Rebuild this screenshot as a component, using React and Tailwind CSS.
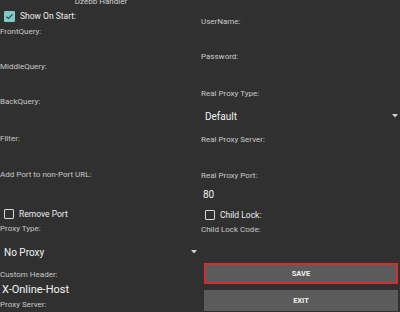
import React from 'react';

// Label shown above each input field
function Label({ text, h = 'h-[10px]' }) {
  return (
    <div className={`${h} flex items-center text-[8px] text-[#c8c8c8] whitespace-nowrap`}>
      {text}
    </div>
  );
}

// Square checkbox with a caption
function Check({ checked, text, className = '' }) {
  return (
    <div className={`flex items-center gap-[5px] ${className}`}>
      {checked ? (
        <span className="w-[11px] h-[11px] rounded-[1px] bg-[#80cbc4] flex items-center justify-center">
          <svg width="9" height="9" viewBox="0 0 24 24">
            <path d="M4 12.5l5 5L20 6.5" fill="none" stroke="#263238" strokeWidth="3" />
          </svg>
        </span>
      ) : (
        <span className="w-[10px] h-[10px] rounded-[1px] border-[1.5px] border-[#d8d8d8]" />
      )}
      <span className="text-[8.5px] text-[#ececec]">{text}</span>
    </div>
  );
}

// Spinner with the small triangle on the right
function Spinner({ value, className = '' }) {
  return (
    <div className={`h-[20px] flex items-center justify-between ${className}`}>
      <span className="text-[10px] text-[#f2f2f2]">{value}</span>
      <svg width="6" height="4" viewBox="0 0 6 4">
        <path d="M0 0h6L3 3.5z" fill="#d0d0d0" />
      </svg>
    </div>
  );
}

function Button({ text, danger }) {
  return (
    <div
      className={`h-[21px] bg-[#5b5b5b] flex items-center justify-center text-[7.5px] font-bold text-[#f0f0f0] ${
        danger ? 'border-[2px] border-[#d32f2f]' : ''
      }`}
    >
      {text}
    </div>
  );
}

export default function App() {
  return (
    <div
      className="w-[400px] h-[312px] bg-[#303030] overflow-hidden grid grid-cols-[200px_200px]"
      style={{ fontFamily: 'Roboto, "Noto Sans", sans-serif' }}
    >
      {/* left column */}
      <div className="flex flex-col pr-[3px]">
        <div className="h-[10px] -mt-[3px] -mb-[1px] flex items-center justify-center pl-[5px] text-[8px] text-[#cfcfcf]">
          Dzebb Handler
        </div>
        <Check checked text="Show On Start:" className="h-[21px] pl-[4px]" />
        <Label text="FrontQuery:" />
        <div className="h-[25px]" />
        <Label text="MiddleQuery:" />
        <div className="h-[25px]" />
        <Label text="BackQuery:" />
        <div className="h-[27px]" />
        <Label text="Filter:" />
        <div className="h-[26px]" />
        <Label text="Add Port to non-Port URL:" />
        <div className="h-[26px]" />
        <Check text="Remove Port" className="h-[16px] pl-[4px]" />
        <div className="h-[2px]" />
        <Label text="Proxy Type:" />
        <div className="h-[8px]" />
        <Spinner value="No Proxy" className="pl-[4px]" />
        <div className="h-[8px]" />
        <Label text="Custom Header:" />
        <div className="h-[20px] flex items-center pl-[2px] text-[11px] text-[#f4f4f4]">X-Online-Host</div>
        <Label text="Proxy Server:" />
      </div>

      {/* right column */}
      <div className="flex flex-col pl-[1px] pr-[2px]">
        <div className="h-[17px]" />
        <Label text="UserName:" />
        <div className="h-[25px]" />
        <Label text="Password:" />
        <div className="h-[27px]" />
        <Label text="Real Proxy Type:" />
        <div className="h-[7px]" />
        <Spinner value="Default" className="pl-[4px]" />
        <div className="h-[9px]" />
        <Label text="Real Proxy Server:" />
        <div className="h-[26px]" />
        <Label text="Real Proxy Port:" />
        <div className="h-[3px]" />
        <div className="h-[20px] flex items-center pl-[2px] text-[10px] text-[#f2f2f2]">80</div>
        <div className="h-[3px]" />
        <Check text="Child Lock:" className="h-[16px] pl-[4px]" />
        <div className="h-[2px]" />
        <Label text="Child Lock Code:" />
        <div className="h-[28px]" />
        <div className="flex flex-col gap-[6px] pl-[3px]">
          <Button text="SAVE" danger />
          <Button text="EXIT" />
        </div>
      </div>
    </div>
  );
}
